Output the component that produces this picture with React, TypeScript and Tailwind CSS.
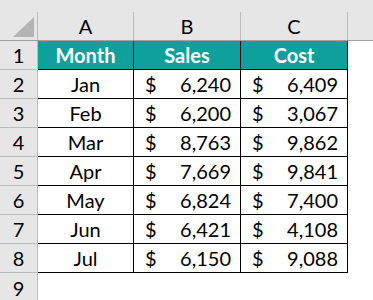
const rows = [
  { m: 'Jan', s: '6,240', c: '6,409' },
  { m: 'Feb', s: '6,200', c: '3,067' },
  { m: 'Mar', s: '8,763', c: '9,862' },
  { m: 'Apr', s: '7,669', c: '9,841' },
  { m: 'May', s: '6,824', c: '7,400' },
  { m: 'Jun', s: '6,421', c: '4,108' },
  { m: 'Jul', s: '6,150', c: '9,088' },
];

const cols = 'grid grid-cols-[38px_96px_107px_107px_1fr]';

const Money = ({ value }: { value: string }) => (
  <div className="flex h-full items-center justify-between border-r border-b border-black pl-[11px] pr-[9px]">
    <span>$</span>
    <span>{value}</span>
  </div>
);

export default function App() {
  return (
    <div className="h-[300px] w-[373px] overflow-hidden bg-white text-[20px] leading-none text-black font-['Lato',sans-serif]">
      <div className="h-[12px] bg-[#e6e6e6]" />
      <div className={`${cols} h-[29px] border-b border-[#9f9f9f] bg-[#e6e6e6]`}>
        <div className="flex items-end justify-end border-r border-[#bcbcbc] pr-[3px] pb-[3px]">
          <svg width="21" height="20" viewBox="0 0 21 20">
            <polygon points="21,0 21,20 0,20" fill="#b4b4b4" />
          </svg>
        </div>
        <div className="flex items-center justify-center border-r border-[#bcbcbc]">A</div>
        <div className="flex items-center justify-center border-r border-[#bcbcbc]">B</div>
        <div className="flex items-center justify-center border-r border-[#bcbcbc]">C</div>
        <div />
      </div>

      <div className={`${cols} h-[29px]`}>
        <div className="flex items-center justify-center border-r border-b border-[#bcbcbc] bg-[#e6e6e6]">1</div>
        <div className="flex items-center justify-center border-r border-b border-black bg-[#0ea09a] font-bold text-white">Month</div>
        <div className="flex items-center justify-center border-r border-b border-black bg-[#0ea09a] font-bold text-white">Sales</div>
        <div className="flex items-center justify-center border-r border-b border-black bg-[#0ea09a] font-bold text-white">Cost</div>
        <div />
      </div>

      {rows.map((r, i) => (
        <div key={r.m} className={`${cols} h-[29px]`}>
          <div className="flex items-center justify-center border-r border-b border-[#bcbcbc] bg-[#e6e6e6]">{i + 2}</div>
          <div className="flex items-center justify-center border-r border-b border-black">{r.m}</div>
          <Money value={r.s} />
          <Money value={r.c} />
          <div />
        </div>
      ))}

      <div className={`${cols} h-[29px]`}>
        <div className="flex items-center justify-center border-r border-[#bcbcbc] bg-[#e6e6e6]">9</div>
        <div />
      </div>
    </div>
  );
}
